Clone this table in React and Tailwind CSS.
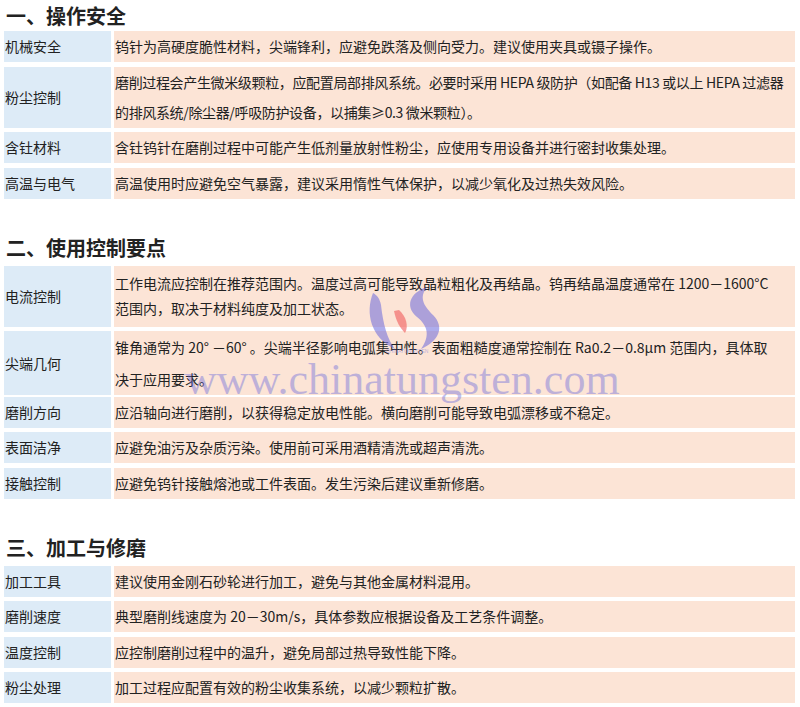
import React from 'react';

const sections = [
  {
    title: '一、操作安全',
    first: true,
    rows: [
      { label: '机械安全', lines: ['钨针为高硬度脆性材料，尖端锋利，应避免跌落及侧向受力。建议使用夹具或镊子操作。'] },
      {
        label: '粉尘控制',
        lead: 'leading-[30px]',
        tight: true,
        lines: [
          '磨削过程会产生微米级颗粒，应配置局部排风系统。必要时采用 HEPA 级防护（如配备 H13 或以上 HEPA 过滤器',
          '的排风系统/除尘器/呼吸防护设备，以捕集≥0.3 微米颗粒）。',
        ],
      },
      { label: '含钍材料', lines: ['含钍钨针在磨削过程中可能产生低剂量放射性粉尘，应使用专用设备并进行密封收集处理。'] },
      { label: '高温与电气', lines: ['高温使用时应避免空气暴露，建议采用惰性气体保护，以减少氧化及过热失效风险。'] },
    ],
  },
  {
    title: '二、使用控制要点',
    rows: [
      {
        label: '电流控制',
        lead: 'leading-[25px]',
        lines: [
          '工作电流应控制在推荐范围内。温度过高可能导致晶粒粗化及再结晶。钨再结晶温度通常在 1200－1600°C',
          '范围内，取决于材料纯度及加工状态。',
        ],
      },
      {
        label: '尖端几何',
        lead: 'leading-[32px]',
        lines: [
          '锥角通常为 20° －60° 。尖端半径影响电弧集中性。表面粗糙度通常控制在 Ra0.2－0.8μm 范围内，具体取',
          '决于应用要求。',
        ],
      },
      { label: '磨削方向', lines: ['应沿轴向进行磨削，以获得稳定放电性能。横向磨削可能导致电弧漂移或不稳定。'] },
      { label: '表面洁净', lines: ['应避免油污及杂质污染。使用前可采用酒精清洗或超声清洗。'] },
      { label: '接触控制', lines: ['应避免钨针接触熔池或工件表面。发生污染后建议重新修磨。'] },
    ],
  },
  {
    title: '三、加工与修磨',
    rows: [
      { label: '加工工具', lines: ['建议使用金刚石砂轮进行加工，避免与其他金属材料混用。'] },
      { label: '磨削速度', lines: ['典型磨削线速度为 20－30m/s，具体参数应根据设备及工艺条件调整。'] },
      { label: '温度控制', lines: ['应控制磨削过程中的温升，避免局部过热导致性能下降。'] },
      { label: '粉尘处理', lines: ['加工过程应配置有效的粉尘收集系统，以减少颗粒扩散。'] },
    ],
  },
];

const Row = ({ row }) => {
  const double = row.lines.length > 1;
  return (
    <div className={`grid grid-cols-[107px_1fr] gap-x-[3px] ${double ? 'h-[61px]' : 'h-[31px]'}`}>
      <div className="flex items-center bg-[#ddebf7] pl-[1px]">{row.label}</div>
      <div
        className={`flex flex-col justify-center bg-[#fce4d6] pl-[1px] whitespace-nowrap ${row.lead || ''} ${
          row.tight ? 'tracking-[-0.35px]' : ''
        }`}
      >
        {row.lines.map((line, i) => (
          <div key={i}>{line}</div>
        ))}
      </div>
    </div>
  );
};

const Watermark = () => (
  <div className="pointer-events-none absolute inset-0">
    <svg className="absolute left-[365px] top-[283px]" width="85" height="75" viewBox="0 0 85 75">
      <path d="M8,10 C0,30 6,55 30,66 C22,56 18,40 16,22 C15,16 12,12 8,10 Z" fill="#6a68dc" fillOpacity="0.55" />
      <path d="M62,4 C44,10 40,24 52,34 C62,42 66,52 56,66 C74,58 80,44 68,32 C58,22 54,14 62,4 Z" fill="#6a68dc" fillOpacity="0.55" />
      <path d="M29,28 C31,38 35,45 40,50 C44,43 41,33 34,27 Z" fill="#f05a5a" fillOpacity="0.6" />
      <text x="42" y="70" textAnchor="middle" fontSize="5" fill="#8a88e0" fillOpacity="0.6" fontFamily="Liberation Sans, sans-serif">
        CHINATUNGSTEN
      </text>
    </svg>
    <div className="absolute left-[185px] top-[358px] font-['Liberation_Serif',serif] text-[44px] leading-none text-[#6264dc] opacity-40 whitespace-nowrap">
      www.chinatungsten.com
    </div>
  </div>
);

export default function App() {
  return (
    <div className="relative w-[800px] h-[707px] overflow-hidden bg-white font-['Noto_Sans_CJK_SC',sans-serif] text-[14px] text-[#222]">
      {sections.map((s, i) => (
        <div key={i} className={s.first ? '' : 'mt-[32px]'}>
          <div className={`flex items-center pl-[6px] text-[20px] font-bold text-[#222] ${s.first ? 'h-[31px]' : 'h-[35px]'}`}>
            {s.title}
          </div>
          <div className="flex flex-col gap-[4.5px] pl-[4px] pr-[5px]">
            {s.rows.map((row, j) => (
              <Row key={j} row={row} />
            ))}
          </div>
        </div>
      ))}
      <Watermark />
    </div>
  );
}
